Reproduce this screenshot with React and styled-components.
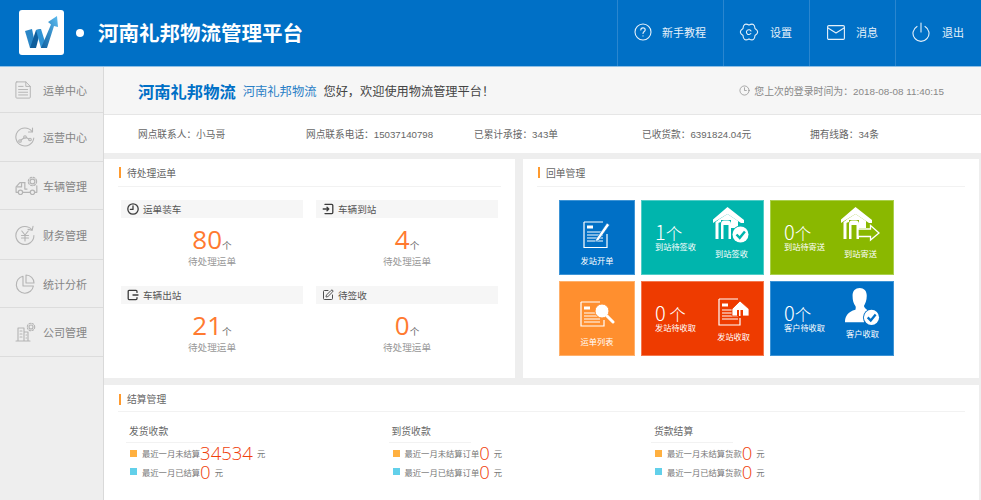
import React from "react";
import styled, { createGlobalStyle } from "styled-components";
import { Clock3, SquarePen } from "lucide-react";

const BLUE = "#0070c6";

const GlobalStyle = createGlobalStyle`
  html, body {
    margin: 0;
    height: 100%;
    overflow: hidden;
    background: #eeeeee;
    font-family: "Liberation Sans", "Noto Sans CJK SC", sans-serif;
  }
  * { box-sizing: border-box; }
`;

const Page = styled.div`
  width: 981px;
  height: 500px;
  display: flex;
  flex-direction: column;
  overflow: hidden;
`;

const Header = styled.header`
  height: 67px;
  flex: none;
  display: flex;
  align-items: center;
  background: ${BLUE};
  border-bottom: 1px solid #8fc0e6;
  padding-left: 19px;
`;

const LogoBox = styled.div`
  width: 45px;
  height: 45px;
  margin-bottom: 1px;
  background: #fff;
  border-radius: 3px;
  display: flex;
  align-items: center;
  justify-content: center;
`;

const Dot = styled.span`
  width: 8px;
  height: 8px;
  margin-left: 12px;
  border-radius: 50%;
  background: #fff;
`;

const BrandTitle = styled.h1`
  margin: 0 0 2px 14px;
  font-size: 20.5px;
  font-weight: 700;
  color: #fff;
  flex: 1;
`;

const NavItem = styled.a`
  width: ${({ $w }) => $w}px;
  height: 66px;
  display: flex;
  align-items: center;
  gap: ${({ $gap }) => $gap}px;
  padding: 0 0 2px ${({ $pad }) => $pad}px;
  border-left: 1px solid #2a86cf;
  color: #e6f1fa;
  font-size: 11px;
`;

const Body = styled.div`
  flex: 1;
  display: flex;
  min-height: 0;
`;

const Sidebar = styled.nav`
  width: 104px;
  flex: none;
  background: #eeeeee;
  border-right: 1px solid #d9d9d9;
`;

const SideItem = styled.div`
  height: ${({ $h }) => $h}px;
  display: flex;
  align-items: center;
  padding-left: 15px;
  border-bottom: 1px solid #dcdcdc;
  color: #858585;
  font-size: 11px;
`;

const SideIcon = styled.span`
  width: 28px;
  display: flex;
  flex: none;
`;

const Main = styled.main`
  flex: 1;
  min-width: 0;
  display: flex;
  flex-direction: column;
`;

const Welcome = styled.div`
  height: 48px;
  flex: none;
  display: flex;
  align-items: center;
  padding: 0 37px 0 34px;
  background: #f6f6f6;
  border-bottom: 1px solid #e6e6e6;
`;

const Company = styled.strong`
  font-size: 16.3px;
  color: ${BLUE};
`;

const CompanyLink = styled.span`
  margin-left: 7px;
  font-size: 12.3px;
  color: #2a7fc6;
`;

const Greeting = styled.span`
  margin-left: 7px;
  font-size: 12.2px;
  color: #444;
`;

const LastLogin = styled.span`
  margin-left: auto;
  display: flex;
  align-items: center;
  gap: 4px;
  font-size: 9.9px;
  color: #888;
`;

const InfoRow = styled.div`
  height: 38px;
  flex: none;
  display: grid;
  grid-template-columns: repeat(5, 168px);
  align-items: center;
  padding-left: 34px;
  background: #fff;
  font-size: 9.7px;
  color: #666;
`;

const Panels = styled.div`
  height: 219px;
  flex: none;
  margin-top: 6px;
  display: flex;
  gap: 8px;
`;

const Panel = styled.section`
  background: #fff;
  width: ${({ $w }) => $w}px;
  padding: 0 14px;
`;

const PanelTitle = styled.div`
  height: ${({ $h }) => $h || 28}px;
  padding-top: ${({ $top }) => $top || 0}px;
  display: flex;
  align-items: center;
  gap: 6px;
  padding-left: 1px;
  border-bottom: 1px solid #f2f2f2;
  font-size: 9.8px;
  color: #666;
  &::before {
    content: "";
    width: 2px;
    height: 11px;
    background: #ff9a2e;
  }
`;

const TodoGrid = styled.div`
  display: grid;
  grid-template-columns: 182px 182px;
  column-gap: 13px;
  padding: 13px 0 0 3px;
`;

const Todo = styled.div`
  height: 85.5px;
  text-align: center;
`;

const TodoHead = styled.div`
  height: 18px;
  display: flex;
  align-items: center;
  gap: 4px;
  padding-left: 6px;
  background: #f6f6f6;
  font-size: 9.6px;
  color: #555;
`;

const TodoCount = styled.div`
  margin-top: 7px;
  height: 28px;
  line-height: 28px;
  font-family: "Open Sans", sans-serif;
  font-size: 26px;
  color: #ff7a30;
`;

const Unit = styled.span`
  font-family: "Noto Sans CJK SC", sans-serif;
  font-size: 9.6px;
  color: #666;
`;

const TodoLabel = styled.div`
  margin-top: 2px;
  font-size: 9.6px;
  color: #999;
  line-height: 14px;
`;

const TileGrid = styled.div`
  display: grid;
  grid-template-columns: 76px 123px 124px;
  grid-auto-rows: 75px;
  gap: 6px;
  padding: 13px 0 0 22px;
`;

const Tile = styled.div`
  background: ${({ $bg }) => $bg};
  border: 1px solid ${({ $edge }) => $edge};
  color: #fff;
  display: flex;
  align-items: center;
  justify-content: ${({ $split }) => ($split ? "space-between" : "center")};
  padding: ${({ $split }) => ($split ? "0 13px" : "0")};
`;

const TileStack = styled.div`
  display: flex;
  flex-direction: column;
  align-items: center;
  gap: ${({ $gap }) => $gap ?? 6}px;
  margin: ${({ $margin }) => $margin || "0 0 8px"};
`;

const TileCount = styled.div`
  font-size: 16.5px;
  line-height: 20px;
  font-family: "Noto Sans CJK SC", sans-serif;
  font-weight: 300;
  b {
    font-weight: 300;
    font-size: 20px;
  }
`;

const TileText = styled.div`
  font-size: 8.2px;
  line-height: 10px;
`;

const Bottom = styled.section`
  flex: 1;
  margin-top: 7px;
  background: #fff;
  padding: 0 14px;
  width: 875px;
`;

const SettleGrid = styled.div`
  display: grid;
  grid-template-columns: repeat(3, 262.5px);
  padding: 13px 0 0 8px;
`;

const SettleHead = styled.div`
  width: ${({ $w }) => $w}px;
  height: 18px;
  padding-left: 3px;
  border-bottom: 1px solid #f2f2f2;
  font-size: 9.8px;
  line-height: 14px;
  color: #666;
  margin-bottom: 1px;
`;

const SettleRow = styled.div`
  height: 18.5px;
  display: flex;
  align-items: center;
  padding-left: 4px;
  font-size: 8.3px;
  color: #777;
`;

const Square = styled.i`
  width: 7px;
  height: 7px;
  margin-right: 5px;
  background: ${({ $c }) => $c};
`;

const Amount = styled.b`
  font-family: "Open Sans", sans-serif;
  font-size: 18.5px;
  line-height: 18px;
  font-weight: 300;
  color: #f0400a;
  margin-right: 4px;
`;

/* header icons */
const LineIcon = ({ w = 20, h = 20, box = "0 0 20 20", color = "#e6f1fa", sw = 1.1, children }) => (
  <svg width={w} height={h} viewBox={box} fill="none" stroke={color} strokeWidth={sw} strokeLinecap="round" strokeLinejoin="round">
    {children}
  </svg>
);

const Logo = () => (
  <svg width="36" height="33" viewBox="0 0 36 33">
    <defs>
      <linearGradient id="lg" x1="0" y1="1" x2="1" y2="0">
        <stop offset="0" stopColor="#0f5f9f" />
        <stop offset="1" stopColor="#5dbcf0" />
      </linearGradient>
    </defs>
    <path d="M1 15 L8 13 L12 32 L6 32Z" fill="#2a86c6" />
    <path d="M6 32 L12 32 L17 13 L12 14Z" fill="#0f5e9c" />
    <path d="M12 14 L17 13 L23 32 L17 32Z" fill="#2f93d4" />
    <path d="M17 32 L23 32 L30 10 L34 11 L33 0 L24 6 L27 8.5Z" fill="url(#lg)" />
  </svg>
);

const HelpIcon = () => (
  <LineIcon w={18} h={18} box="0 0 18 18">
    <circle cx="9" cy="9" r="8" />
    <path d="M6.8 7 C6.8 5.6 7.8 4.9 9 4.9 C10.3 4.9 11.2 5.7 11.2 6.9 C11.2 8.4 9 8.6 9 10.4" />
    <path d="M9 12.7 V13" />
  </LineIcon>
);

// six rounded lobes around the centre, lying left and right like the reference
const polar = (r, deg) => {
  const a = (deg * Math.PI) / 180;
  return `${(10 + r * Math.cos(a)).toFixed(2)} ${(9 + r * Math.sin(a)).toFixed(2)}`;
};
const gearPath =
  `M${polar(6.9, -30)} ` +
  [0, 60, 120, 180, 240, 300].map((a) => `Q${polar(11.4, a)} ${polar(6.9, a + 30)}`).join(" ") +
  "Z";

const GearIcon = () => (
  <LineIcon w={20} h={18} box="0 0 20 18">
    <path d={gearPath} />
    <path d="M12 8 A2.4 2.4 0 1 0 11.8 10.5" />
  </LineIcon>
);

const MailIcon = () => (
  <LineIcon w={18} h={15} box="0 0 18 15">
    <rect x="0.6" y="0.6" width="16.8" height="13.8" rx="1.2" />
    <path d="M1 3 L9 8 L17 3" />
  </LineIcon>
);

const PowerIcon = () => (
  <LineIcon w={18} h={20} box="0 0 18 20">
    <path d="M5 4.4 A8 8 0 1 0 13 4.4" />
    <path d="M9 1 V10" />
  </LineIcon>
);

/* sidebar icons */
const Grey = (props) => <LineIcon color="#b4b4b4" sw={1.1} {...props} />;

const DocIcon = () => (
  <Grey w={18} h={20}>
    <path d="M2 1 H12 L17 6 V18 Q17 19 16 19 H2 Q1 19 1 18 V2 Q1 1 2 1Z" />
    <path d="M12 1 V6 H17 M4 6 H9 M4 9.5 H14 M4 12.5 H14 M4 15.5 H14" />
  </Grey>
);

const RouteIcon = () => (
  <Grey w={20} h={20}>
    <path d="M17 4.5 A9 9 0 1 0 18.8 11" />
    <path d="M17.5 1 V5 H13.5" />
    <circle cx="5" cy="14" r="1.3" />
    <circle cx="10" cy="10" r="1.3" />
    <circle cx="15" cy="12.5" r="1.3" />
    <path d="M6 13 L9 11 M11.2 10.6 L13.8 12" />
  </Grey>
);

const TruckIcon = () => (
  <Grey w={24} h={19} box="0 0 22 17.4">
    <path d="M9 6 H4.5 L1 10 V15 H3 M7 15 H14 M18 15 H20 V9" />
    <path d="M2 10 H6 V7" />
    <circle cx="5" cy="15" r="2" />
    <circle cx="16" cy="15" r="2" />
    <circle cx="16" cy="5" r="2.2" />
    <circle cx="16" cy="5" r="3.8" strokeDasharray="1.6 1.4" />
    <path d="M9 6 V12 H11" />
  </Grey>
);

const YuanIcon = () => (
  <Grey w={20} h={20}>
    <path d="M17 5 A9 9 0 1 0 18.9 10.5" />
    <path d="M13 4.4 L17.2 5.2 L18 1.4" />
    <path d="M6.8 6 L10 10 L13.2 6 M10 10 V16 M6.5 10.5 H13.5 M6.5 13 H13.5" />
  </Grey>
);

const PieIcon = () => (
  <Grey w={20} h={20}>
    <path d="M8 2.2 A8.6 8.6 0 1 0 18.4 12 H8Z" />
    <path d="M11 1 A8 8 0 0 1 19 9 H11Z" />
  </Grey>
);

const CompanyIcon = () => (
  <Grey w={22} h={20} box="0 0 22 20">
    <path d="M1 19 H15 M3 19 V6 H9 V19 M9 10 H13 V19" />
    <path d="M5 9 H7 M5 12 H7 M5 15 H7 M11 13 H11.6 M11 16 H11.6" />
    <circle cx="16" cy="5" r="2" />
    <circle cx="16" cy="5" r="3.7" strokeDasharray="1.6 1.4" />
  </Grey>
);

/* small dark icons of the todo heads */
const Small = ({ children }) => <LineIcon w={12} h={12} box="0 0 12 12" color="#3c3c3c" sw={1.3}>{children}</LineIcon>;

const LoadIcon = () => (
  <Small>
    <circle cx="6" cy="6" r="5.2" />
    <path d="M6 2.8 V6.4 H3.4" />
  </Small>
);

const ArriveIcon = () => (
  <Small>
    <path d="M3 1.4 H9.8 Q10.8 1.4 10.8 2.4 V9.6 Q10.8 10.6 9.8 10.6 H3" />
    <path d="M1.2 6 H6.8 M5 4.2 L6.8 6 L5 7.8" />
  </Small>
);

const LeaveIcon = () => (
  <Small>
    <path d="M10 3.4 V2.4 Q10 1.4 9 1.4 H2 Q1.2 1.4 1.2 2.4 V9.6 Q1.2 10.6 2 10.6 H9 Q10 10.6 10 9.6 V8.6" />
    <path d="M6 6 H11" />
  </Small>
);

/* tile pictures */
const Check = ({ cx, cy, r, bg }) => (
  <g>
    <circle cx={cx} cy={cy} r={r + 1} fill={bg} />
    <circle cx={cx} cy={cy} r={r} fill="#fff" />
    <path d={`M${cx - r * 0.5} ${cy} L${cx - r * 0.1} ${cy + r * 0.42} L${cx + r * 0.55} ${cy - r * 0.38}`} fill="none" stroke={bg} strokeWidth={r * 0.3} />
  </g>
);

const House = () => (
  <g fill="#fff">
    <path d="M14.5 0 L31 13 V16 L28 16 L14.5 7 L3 14 L0 16 V12.5Z" />
    <path d="M2.5 15 L5.5 13 V32 H2.5Z" />
    <path d="M8 17 Q8 13.5 11 13.5 H15 Q18 13.5 18 17 V32 H15.5 V18 H10.5 V32 H8Z" />
    <path d="M5 13 L14.5 7 L25 14 V21 H18 V13 H8 V15 L5 16Z" />
  </g>
);

const HouseCheck = ({ bg }) => (
  <svg width="37" height="37" viewBox="0 0 37 37">
    <House />
    <Check cx={27.5} cy={27.5} r={8} bg={bg} />
  </svg>
);

const HouseArrow = ({ bg }) => (
  <svg width="39" height="37" viewBox="0 0 39 37">
    <House />
    <path d="M17 22 H29.5 V18.5 L38 26 L29.5 33 V29.5 H17Z" fill={bg} stroke="#fff" strokeWidth="1.3" />
  </svg>
);

const DocLines = () => (
  <g fill="none" stroke="#fff">
    <path d="M4 7 H10" strokeWidth="3" />
    <path d="M4 12 H20 M4 15 H20 M4 18 H20 M4 21 H20" strokeWidth="1.2" />
  </g>
);

const DocPen = () => (
  <svg width="27" height="29" viewBox="0 0 27 29">
    <path d="M1 2 H20 M1 2 V27.5 H24 V14" fill="none" stroke="#fff" strokeWidth="1.2" />
    <DocLines />
    <path d="M13 19 L24 3 L26.5 5 L15.5 20.5 L12.5 21.5Z" fill="#fff" stroke="#0070c6" strokeWidth=".6" />
  </svg>
);

const DocSearch = () => (
  <svg width="35" height="30" viewBox="0 0 35 30">
    <path d="M1 1 H20 M1 1 V25 H24 V19" fill="none" stroke="#fff" strokeWidth="1.2" />
    <DocLines />
    <circle cx="22" cy="10" r="7" fill="#fff" stroke="#ff8f2f" />
    <path d="M27 15 L33 21" stroke="#fff" strokeWidth="3" strokeLinecap="round" />
  </svg>
);

const DocHome = () => (
  <svg width="32" height="28" viewBox="0 0 32 28">
    <path d="M1 1 H20 M1 1 V27 H22 V20" fill="none" stroke="#fff" strokeWidth="1.2" />
    <DocLines />
    <path d="M22 3 L31 11 V18 H14 V11Z" fill="#fff" stroke="#ee3b00" strokeWidth=".8" />
    <path d="M19 12 H25 V18 H19Z" fill="#ee3b00" />
    <path d="M21 12 H22.5 V18 H21Z" fill="#fff" />
  </svg>
);

const PersonCheck = () => (
  <svg width="35" height="38" viewBox="0 0 37 40">
    <path d="M8 8 C8 3 11 0 15.5 0 C20 0 23 3 23 8 C23 13 21.5 16 20 19 C21 23 26 24 29 26 L20 36 H0 C0 30 3 25 11 23 C11.5 21 11.5 20 11 19 C9 16 8 13 8 8Z" fill="#fff" />
    <Check cx={28} cy={31} r={8} bg="#0070c6" />
  </svg>
);

const sideItems = [
  { label: "运单中心", Icon: DocIcon, h: 46 },
  { label: "运营中心", Icon: RouteIcon, h: 49 },
  { label: "车辆管理", Icon: TruckIcon, h: 48 },
  { label: "财务管理", Icon: YuanIcon, h: 50 },
  { label: "统计分析", Icon: PieIcon, h: 48 },
  { label: "公司管理", Icon: CompanyIcon, h: 49 },
];

const todos = [
  { head: "运单装车", icon: <LoadIcon />, count: "80" },
  { head: "车辆到站", icon: <ArriveIcon />, count: "4" },
  { head: "车辆出站", icon: <LeaveIcon />, count: "21" },
  { head: "待签收", icon: <SquarePen size={12} color="#3c3c3c" strokeWidth={1.8} />, count: "0" },
];

const settle = [
  { head: "发货收款", w: 104, a: "最近一月未结算", an: "34534", b: "最近一月已结算", bn: "0" },
  { head: "到货收款", w: 82, a: "最近一月未结算订单", an: "0", b: "最近一月已结算订单", bn: "0" },
  { head: "货款结算", w: 82, a: "最近一月未结算货款", an: "0", b: "最近一月已结算货款", bn: "0" },
];

export default function App() {
  return (
    <Page>
      <GlobalStyle />
      <Header>
        <LogoBox><Logo /></LogoBox>
        <Dot />
        <BrandTitle>河南礼邦物流管理平台</BrandTitle>
        <NavItem $w={106} $pad={16} $gap={10}><HelpIcon />新手教程</NavItem>
        <NavItem $w={86} $pad={15} $gap={11}><GearIcon />设置</NavItem>
        <NavItem $w={86} $pad={17} $gap={11}><MailIcon />消息</NavItem>
        <NavItem $w={86} $pad={16} $gap={12}><PowerIcon />退出</NavItem>
      </Header>
      <Body>
        <Sidebar>
          {sideItems.map(({ label, Icon, h }) => (
            <SideItem key={label} $h={h}>
              <SideIcon><Icon /></SideIcon>
              {label}
            </SideItem>
          ))}
        </Sidebar>
        <Main>
          <Welcome>
            <Company>河南礼邦物流</Company>
            <CompanyLink>河南礼邦物流</CompanyLink>
            <Greeting>您好，欢迎使用物流管理平台！</Greeting>
            <LastLogin>
              <Clock3 size={11} color="#888" strokeWidth={1.5} />
              您上次的登录时间为：2018-08-08 11:40:15
            </LastLogin>
          </Welcome>
          <InfoRow>
            <span>网点联系人：小马哥</span>
            <span>网点联系电话：15037140798</span>
            <span>已累计承接：343单</span>
            <span>已收货款：6391824.04元</span>
            <span>拥有线路：34条</span>
          </InfoRow>
          <Panels>
            <Panel $w={411}>
              <PanelTitle>待处理运单</PanelTitle>
              <TodoGrid>
                {todos.map((t) => (
                  <Todo key={t.head}>
                    <TodoHead>{t.icon}{t.head}</TodoHead>
                    <TodoCount>{t.count}<Unit>个</Unit></TodoCount>
                    <TodoLabel>待处理运单</TodoLabel>
                  </Todo>
                ))}
              </TodoGrid>
            </Panel>
            <Panel $w={456}>
              <PanelTitle>回单管理</PanelTitle>
              <TileGrid>
                <Tile $bg="#0070c6" $edge="#3d94d6">
                  <TileStack $gap={8} $margin="12px 0 0"><DocPen /><TileText>发站开单</TileText></TileStack>
                </Tile>
                <Tile $split $bg="#00b5ad" $edge="#4fcdc7">
                  <div><TileCount><b>1</b>个</TileCount><TileText>到站待签收</TileText></div>
                  <TileStack><HouseCheck bg="#00b5ad" /><TileText>到站签收</TileText></TileStack>
                </Tile>
                <Tile $split $bg="#8ab800" $edge="#aad04d">
                  <div><TileCount><b>0</b>个</TileCount><TileText>到站待寄送</TileText></div>
                  <TileStack><HouseArrow bg="#8ab800" /><TileText>到站寄送</TileText></TileStack>
                </Tile>
                <Tile $bg="#ff8f2f" $edge="#ffb06b">
                  <TileStack $gap={7} $margin="12px 0 0"><DocSearch /><TileText>运单列表</TileText></TileStack>
                </Tile>
                <Tile $split $bg="#ee3b00" $edge="#f5784d">
                  <div><TileCount><b>0</b> 个</TileCount><TileText>发站待收取</TileText></div>
                  <TileStack $gap={7} $margin="0 0 -3px"><DocHome /><TileText>发站收取</TileText></TileStack>
                </Tile>
                <Tile $split $bg="#0070c6" $edge="#3d94d6">
                  <div><TileCount><b>0</b>个</TileCount><TileText>客户待收取</TileText></div>
                  <TileStack $gap={4} $margin="0 0 9px"><PersonCheck /><TileText>客户收取</TileText></TileStack>
                </Tile>
              </TileGrid>
            </Panel>
          </Panels>
          <Bottom>
            <PanelTitle $h={27} $top={2}>结算管理</PanelTitle>
            <SettleGrid>
              {settle.map((s) => (
                <div key={s.head}>
                  <SettleHead $w={s.w}>{s.head}</SettleHead>
                  <SettleRow><Square $c="#ffb040" />{s.a}<Amount>{s.an}</Amount>元</SettleRow>
                  <SettleRow><Square $c="#62d0ea" />{s.b}<Amount>{s.bn}</Amount>元</SettleRow>
                </div>
              ))}
            </SettleGrid>
          </Bottom>
        </Main>
      </Body>
    </Page>
  );
}
